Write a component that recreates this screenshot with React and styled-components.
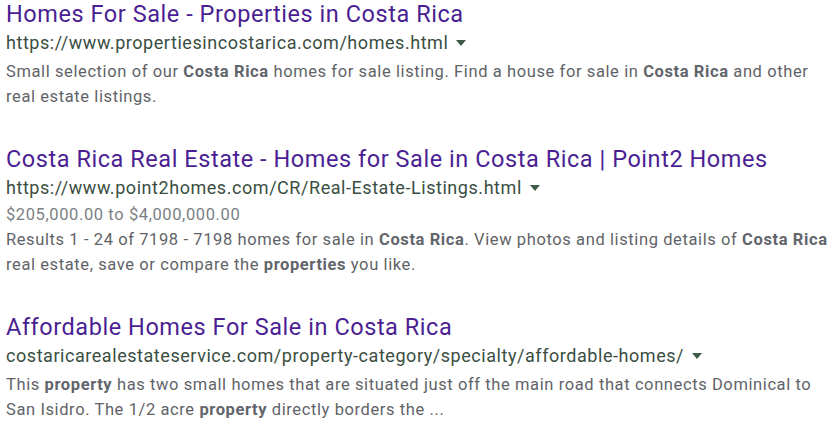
import React from 'react';
import styled, { createGlobalStyle } from 'styled-components';

const GlobalStyle = createGlobalStyle`
  html, body {
    margin: 0;
    padding: 0;
    background: #ffffff;
  }
  body {
    font-family: Roboto, "Liberation Sans", Arial, sans-serif;
  }
`;

const Page = styled.div`
  width: 832px;
  height: 424px;
  padding: 0 0 0 6px;
  box-sizing: border-box;
  overflow: hidden;
  display: flex;
  flex-direction: column;
  gap: 36px;
`;

const Result = styled.div`
  width: 828px;
  display: flex;
  flex-direction: column;
`;

const Title = styled.a`
  font-size: 23.5px;
  line-height: 28px;
  letter-spacing: 0.55px;
  color: #4b1f93;
  text-decoration: none;
  white-space: nowrap;
`;

const UrlRow = styled.div`
  display: flex;
  align-items: center;
  gap: 8px;
  height: 28px;
  font-size: 18px;
  letter-spacing: 0.55px;
  color: #3a4e42;
`;

const Arrow = styled.span`
  width: 0;
  height: 0;
  border-left: 5.5px solid transparent;
  border-right: 5.5px solid transparent;
  border-top: 6px solid #3e5a45;
  margin-top: 1px;
`;

const Meta = styled.div`
  margin-top: 1px;
  font-size: 16.5px;
  line-height: 26px;
  letter-spacing: 0.6px;
  color: #7b7f84;
`;

const Snippet = styled.div`
  margin-top: ${(p) => (p.$afterMeta ? '0' : '4px')};
  font-size: 16.5px;
  line-height: 24.5px;
  letter-spacing: 0.6px;
  color: #5f6368;

  b {
    font-weight: 700;
    color: #62656c;
  }
`;

const results = [
  {
    title: 'Homes For Sale - Properties in Costa Rica',
    url: 'https://www.propertiesincostarica.com/homes.html',
    snippet: (
      <>
        Small selection of our <b>Costa Rica</b> homes for sale listing. Find a house for sale in <b>Costa Rica</b> and other real estate listings.
      </>
    ),
  },
  {
    title: 'Costa Rica Real Estate - Homes for Sale in Costa Rica | Point2 Homes',
    url: 'https://www.point2homes.com/CR/Real-Estate-Listings.html',
    meta: '$205,000.00 to $4,000,000.00',
    snippet: (
      <>
        Results 1 - 24 of 7198 - 7198 homes for sale in <b>Costa Rica</b>. View photos and listing details of <b>Costa Rica</b> real estate, save or compare the <b>properties</b> you like.
      </>
    ),
  },
  {
    title: 'Affordable Homes For Sale in Costa Rica',
    url: 'costaricarealestateservice.com/property-category/specialty/affordable-homes/',
    snippet: (
      <>
        This <b>property</b> has two small homes that are situated just off the main road that connects Dominical to San Isidro. The 1/2 acre <b>property</b> directly borders the ...
      </>
    ),
  },
];

export default function App() {
  return (
    <>
      <GlobalStyle />
      <Page>
        {results.map((r) => (
          <Result key={r.url}>
            <Title href="#">{r.title}</Title>
            <UrlRow>
              <span>{r.url}</span>
              <Arrow />
            </UrlRow>
            {r.meta && <Meta>{r.meta}</Meta>}
            <Snippet $afterMeta={!!r.meta}>{r.snippet}</Snippet>
          </Result>
        ))}
      </Page>
    </>
  );
}
